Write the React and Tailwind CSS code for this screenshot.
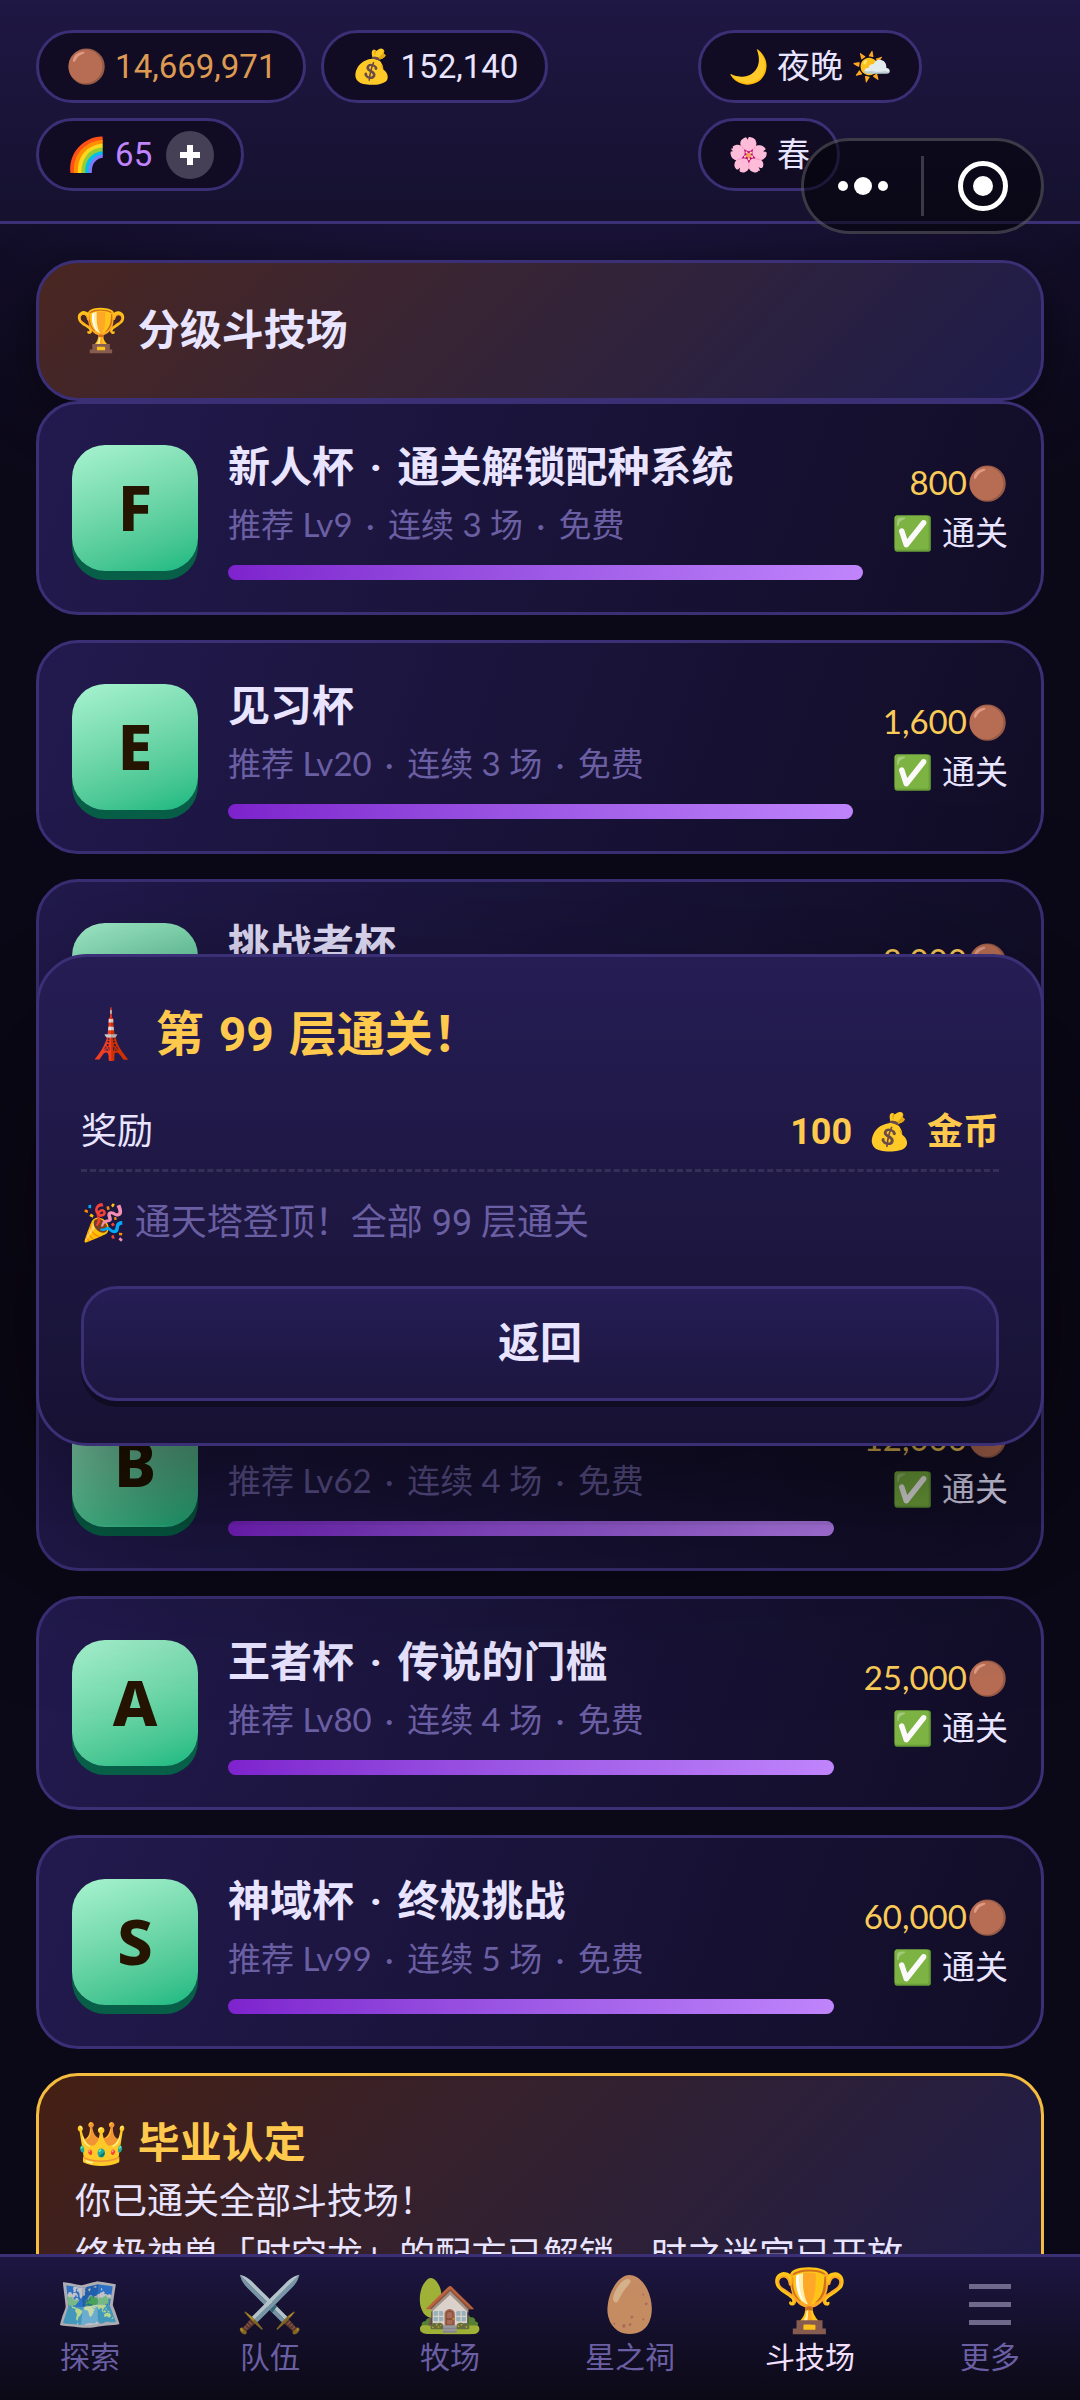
import React, { useState } from 'react';

const cups = [
  { rank: 'F', name: ['新人杯', '通关解锁配种系统'], level: 9, rounds: 3, reward: '800' },
  { rank: 'E', name: ['见习杯'], level: 20, rounds: 3, reward: '1,600' },
  { rank: 'D', name: ['挑战者杯'], level: 32, rounds: 3, reward: '3,000' },
  { rank: 'C', name: ['勇者杯'], level: 46, rounds: 4, reward: '6,000' },
  { rank: 'B', name: ['大师杯'], level: 62, rounds: 4, reward: '12,000' },
  { rank: 'A', name: ['王者杯', '传说的门槛'], level: 80, rounds: 4, reward: '25,000' },
  { rank: 'S', name: ['神域杯', '终极挑战'], level: 99, rounds: 5, reward: '60,000' },
];

const tabs = [
  { icon: '🗺️', label: '探索' },
  { icon: '⚔️', label: '队伍' },
  { icon: '🏡', label: '牧场' },
  { icon: '🥚', label: '星之祠' },
  { icon: '🏆', label: '斗技场' },
  { icon: null, label: '更多' },
];

// Joins parts with a spaced middle dot
const Dotted = ({ parts }) =>
  parts.map((part, index) => (
    <React.Fragment key={index}>
      {index > 0 && <span className="mx-[5px]"> · </span>}
      {part}
    </React.Fragment>
  ));

const Pill = ({ children }) => (
  <div className="flex h-[73px] items-center gap-2 whitespace-nowrap rounded-full border-3 border-[#3b2f75] bg-[#110c24] px-[27px]">
    {children}
  </div>
);

const Header = () => (
  <header className="flex shrink-0 items-start justify-between border-b-3 border-[#3b2f75] bg-linear-to-b from-[#1f1744] to-[#15112e] px-9 py-[30px] text-[33px] leading-[50px]">
    <div className="flex flex-1 flex-wrap gap-[15px]">
      <Pill>
        <span>🟤</span>
        <span className="text-[#dd9a52]">14,669,971</span>
      </Pill>
      <Pill>
        <span>💰</span>
        <span>152,140</span>
      </Pill>
      <Pill>
        <span>🌈</span>
        <span className="text-[#c084fc]">65</span>
        <button aria-label="充值" className="ml-1.5 flex size-12 items-center justify-center rounded-full bg-[#454056]">
          <svg viewBox="0 0 20 20" className="size-5" fill="#fff">
            <path d="M7 0h6v7h7v6h-7v7H7v-7H0V7h7z" />
          </svg>
        </button>
      </Pill>
    </div>
    <div className="flex w-[346px] flex-col items-start gap-[15px]">
      <Pill>
        <span>🌙</span>
        <span>夜晚</span>
        <span>🌤️</span>
      </Pill>
      <Pill>
        <span>🌸</span>
        <span>春</span>
      </Pill>
    </div>
  </header>
);

// Host app controls, floating over the header
const Capsule = () => (
  <div className="absolute right-9 top-[138px] flex h-24 items-center rounded-full border-3 border-white/20 bg-black/50">
    <button aria-label="更多操作" className="flex w-[117px] items-center justify-center">
      <svg viewBox="0 0 52 20" className="h-5 w-[52px]" fill="#fff">
        <circle cx="6" cy="10" r="5" />
        <circle cx="26" cy="10" r="9" />
        <circle cx="46" cy="10" r="5" />
      </svg>
    </button>
    <span className="h-[60px] w-[3px] bg-white/20" />
    <button aria-label="关闭" className="flex w-[117px] items-center justify-center">
      <svg viewBox="0 0 50 50" className="size-[50px]" fill="none">
        <circle cx="25" cy="25" r="22.5" stroke="#fff" strokeWidth="5" />
        <circle cx="25" cy="25" r="10" fill="#fff" />
      </svg>
    </button>
  </div>
);

const CupCard = ({ cup }) => (
  <li className="flex items-center gap-[30px] rounded-[42px] border-3 border-[#3b2f75] bg-linear-110 from-[#221a4e] to-[#110d26] px-[33px] py-8">
    <div className="flex size-[126px] shrink-0 items-center justify-center rounded-[33px] bg-linear-160 from-[#a7f3d0] to-[#10b981] pb-1 font-['Noto_Sans'] text-[63px] font-extrabold leading-none text-[#241400] shadow-[0_9px_0_#065f46]">
      {cup.rank}
    </div>
    <div className="min-w-0 flex-1">
      <h2 className="text-[42px] font-bold leading-[63px]">
        <Dotted parts={cup.name} />
      </h2>
      <p className="font-[Lato,'Noto_Sans_CJK_SC',sans-serif] text-[33px] leading-[50px] text-[#6b5fa3]">
        <Dotted parts={[`推荐 Lv${cup.level}`, `连续 ${cup.rounds} 场`, '免费']} />
      </p>
      <div
        role="progressbar"
        aria-valuenow={100}
        aria-label={cup.name[0]}
        className="mt-4 h-[15px] rounded-full bg-linear-to-r from-[#7e22ce] to-[#c084fc]"
      />
    </div>
    <div className="shrink-0 text-right text-[33px] leading-[50px]">
      <div className="text-[#fbcb58]">
        <span className="font-[Lato,sans-serif]">{cup.reward}</span>🟤
      </div>
      <div>✅ 通关</div>
    </div>
  </li>
);

const ResultDialog = ({ onClose }) => (
  <div className="absolute inset-0 flex items-center justify-center px-9">
    <section
      role="dialog"
      aria-labelledby="result-title"
      className="w-full rounded-[51px] border-3 border-[#3b2f75] bg-linear-to-b from-[#251d54] to-[#171233] p-[42px] shadow-[0_60px_180px_rgba(0,0,0,0.65)]"
    >
      <h2 id="result-title" className="flex gap-[15px] text-5xl font-bold leading-[72px] text-[#ffc94d]">
        <span>🗼</span>
        <span>第</span>
        <span>99</span>
        <span>层通关！</span>
      </h2>
      <div className="mt-6 flex justify-between border-b-3 border-dashed border-white/10 py-[10px] text-4xl leading-[54px]">
        <span>奖励</span>
        <b className="flex gap-[15px] text-[#ffc94d]">
          <span>100</span>
          <span>💰</span>
          <span>金币</span>
        </b>
      </div>
      <p className="mt-6 text-4xl leading-[54px] text-[#6b5fa3]">
        🎉 通天塔登顶！全部 99 层通关
      </p>
      <button
        onClick={onClose}
        className="mt-9 h-[115px] w-full rounded-[36px] border-3 border-[#3b2f75] bg-linear-to-b from-[#251d54] to-[#1c1640] text-[42px] font-bold shadow-[0_6px_0_rgba(0,0,0,0.35)]"
      >
        返回
      </button>
    </section>
  </div>
);

const TabBar = ({ active, onChange }) => (
  <nav className="relative grid shrink-0 grid-cols-6 border-t-3 border-[#3b2f75] bg-linear-to-b from-[#1d1642] to-[#0c0916] pb-5 pt-[18px]">
    {tabs.map((tab) => (
      <button
        key={tab.label}
        onClick={() => onChange(tab.label)}
        className={`flex flex-col items-center ${active === tab.label ? 'text-[#f3e0ff]' : 'text-[#6b5fa3]'}`}
      >
        {tab.icon ? (
          <span
            className={`flex h-[60px] items-center ${
              active === tab.label ? 'pb-2 text-[62px] leading-none' : 'text-[54px] leading-none opacity-85 grayscale-20'
            }`}
          >
            {tab.icon}
          </span>
        ) : (
          <span className="flex h-[60px] items-center">
            <svg viewBox="0 0 42 42" className="size-[42px]" fill="#6f6a8c">
              <path d="M0 0h42v5H0zM0 18h42v5H0zM0 36h42v5H0z" />
            </svg>
          </span>
        )}
        <span className="text-[30px] leading-[45px]">{tab.label}</span>
      </button>
    ))}
  </nav>
);

const App = () => {
  const [active, setActive] = useState('斗技场');
  const [open, setOpen] = useState(true);

  return (
    <div className="relative flex h-screen flex-col overflow-hidden bg-[#080612] bg-[radial-gradient(ellipse_90%_24%_at_top,#231a4e,#0b0817)] font-[Roboto,'Noto_Sans_CJK_SC','Noto_Color_Emoji',sans-serif] text-[#e9e4ff]">
      <Header />
      <main className="min-h-0 flex-1 overflow-hidden px-9 pt-9">
        <div className="rounded-[42px] border-3 border-[#3b2f75] bg-linear-135 from-[#4a2620] to-[#1e1b4b] px-9 py-9 shadow-[0_12px_48px_rgba(0,0,0,0.5)]">
          <h1 className="text-[42px] font-bold leading-[63px]">🏆 分级斗技场</h1>
        </div>
        <ul className="flex flex-col gap-[25px]">
          {cups.map((cup) => (
            <CupCard key={cup.rank} cup={cup} />
          ))}
        </ul>
        <section className="mt-6 rounded-[42px] border-3 border-[#f5bd3f] bg-linear-135 from-[#451f12] to-[#1e1b4b] p-9 text-4xl leading-[54px]">
          <h2 className="text-[42px] font-bold leading-[63px] text-[#ffc94d]">👑 毕业认定</h2>
          <p>你已通关全部斗技场！</p>
          <p>终极神兽「时空龙」的配方已解锁，时之迷宫已开放。</p>
        </section>
      </main>
      <TabBar active={active} onChange={setActive} />
      {open && <ResultDialog onClose={() => setOpen(false)} />}
      <Capsule />
    </div>
  );
};

export default App;
